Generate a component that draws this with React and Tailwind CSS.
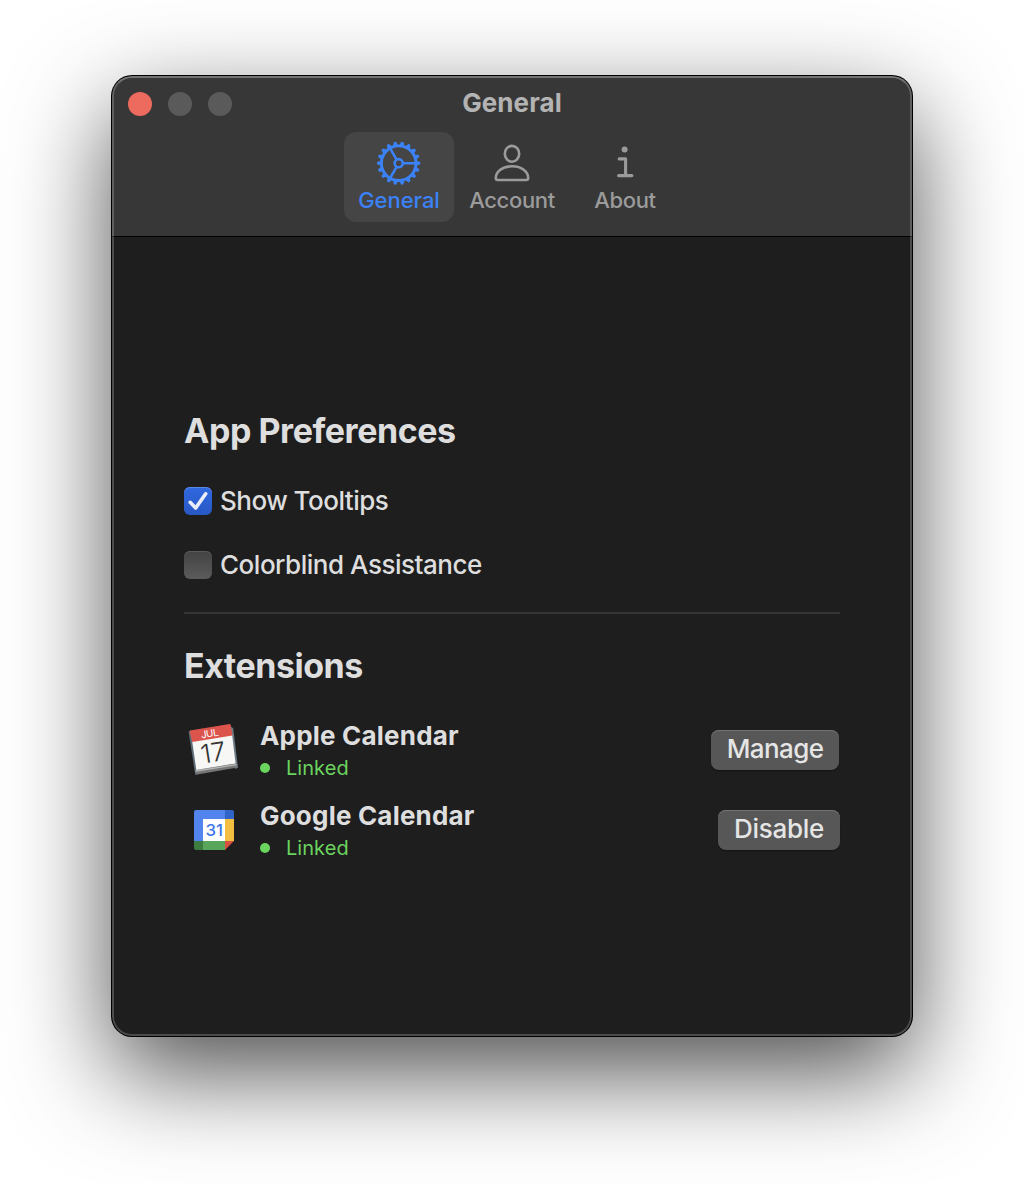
const TEETH = Array.from({ length: 18 }, (_, i) => i * 20);

function GearIcon() {
  return (
    <svg width="46" height="46" viewBox="-22.7 -23.2 46 46" fill="none" stroke="currentColor" strokeWidth="2.6">
      <circle r="17.3" strokeWidth="2.9" />
      <circle r="4.1" />
      {[0, 120, 240].map((a) => (
        <path key={a} d="M4.5 0H17.5" transform={`rotate(${a})`} />
      ))}
      {TEETH.map((a) => (
        <path key={a} d="M18 -2.4L21.4 -1.3Q22.1 0 21.4 1.3L18 2.4Z" transform={`rotate(${a})`} fill="currentColor" stroke="none" />
      ))}
    </svg>
  );
}

function PersonIcon() {
  return (
    <svg width="46" height="46" viewBox="0 0 46 46" fill="none" stroke="currentColor" strokeWidth="2.6" strokeLinejoin="round">
      <ellipse cx="23" cy="13.8" rx="7.2" ry="7.9" />
      <path d="M8.8 40H37.2Q39.2 40 39.2 38C39.2 32.5 33.5 26.3 23 26.3S6.8 32.5 6.8 38Q6.8 40 8.8 40Z" />
    </svg>
  );
}

function InfoIcon() {
  return (
    <svg width="46" height="46" viewBox="0 0 46 46" fill="none" stroke="currentColor" strokeWidth="3" strokeLinecap="round" strokeLinejoin="round">
      <circle cx="22.6" cy="9.6" r="3" fill="currentColor" stroke="none" />
      <path d="M17.2 18.9H23.6V35.4M16.6 35.6H29.9" strokeWidth="3.1" />
    </svg>
  );
}

function AppleCalendarIcon() {
  return (
    <svg width="56" height="56" viewBox="0 0 56 56">
      <path d="M4.6 11.8L7 10L14 51L11.3 55.3Z" fill="#5c6b75" />
      <path d="M46 6L49.2 8.2L54 47.8L51 49Z" fill="#6b7a82" />
      <path d="M11.3 50L51.8 43.5L53.6 47.6L11.8 54.8Z" fill="#77777a" />
      <path d="M11.6 51.2L52.6 44.6" stroke="#b9b9b6" strokeWidth="1.2" />
      <path d="M8 20L48 14L51.6 43.4L12.3 50.1Z" fill="#f7f7f6" />
      <path d="M6 10.6L45.6 4Q46.4 4 46.6 4.8L48.4 15.6L8.3 22L5.7 11.6Z" fill="#dc554d" />
      <g transform="rotate(-9 27 28)" fontFamily="Inter, sans-serif" textAnchor="middle">
        <text x="28" y="17" fontSize="10" fill="#fff" textLength="18">JUL</text>
        <text x="28.5" y="42.2" fontSize="26" fontWeight="300" fill="#333" textLength="25" lengthAdjust="spacingAndGlyphs">17</text>
      </g>
    </svg>
  );
}

function GoogleCalendarIcon() {
  return (
    <svg width="40" height="40" viewBox="0 0 40 40">
      <path d="M2 0H31V9H9V31H0V2Q0 0 2 0Z" fill="#5383ec" />
      <path d="M31 0H38Q40 0 40 2V9H31Z" fill="#3064c8" />
      <path d="M31 9H40V31H31Z" fill="#f2bf42" />
      <path d="M0 31H9V40H2Q0 40 0 38Z" fill="#3c7d3f" />
      <path d="M9 31H31V40H9Z" fill="#58a55c" />
      <path d="M31 31H40L31 40Z" fill="#d85140" />
      <path d="M9 9H31V31H9Z" fill="#fff" />
      <text x="20.2" y="26" fontSize="16.5" fontFamily="Inter, sans-serif" fontWeight="500" fill="#3d76e8" textAnchor="middle" textLength="17.5" lengthAdjust="spacingAndGlyphs">31</text>
    </svg>
  );
}

function Tab({ icon, label, active }) {
  return (
    <div className={`flex h-[90px] w-[110px] flex-col items-center rounded-xl pt-2 text-[22px] leading-[26px] font-medium ${active ? "bg-[#454545] text-[#3b82f7] tracking-[-0.05px]" : "text-[#9b9b9b] tracking-[-0.35px]"}`}>
      {icon}
      <span className="mt-px">{label}</span>
    </div>
  );
}

function Extension({ icon, name, button }) {
  return (
    <div className="flex h-20 items-start">
      <div className="flex h-14 w-[76px] items-start">{icon}</div>
      <div className="grow">
        <h3 className="text-[26px] leading-8 font-bold tracking-[0.2px]">{name}</h3>
        <div className="flex items-center text-[20px] leading-6 tracking-[0.05px] text-[#6bd45f]">
          <span className="mt-1 mr-4 size-2.5 rounded-full bg-[#6bd45f]" />
          <span className="mt-1">Linked</span>
        </div>
      </div>
      {button}
    </div>
  );
}

const buttonClass = "mt-2.5 h-10 rounded-lg bg-[#575757] pb-0.5 text-[26px] leading-[36px] font-medium text-[#e5e5e5] shadow-[inset_0_1px_0_#737373,0_1px_1px_rgba(0,0,0,0.4)]";

export default function App() {
  return (
    <main className="h-[1184px] w-[1024px] overflow-hidden bg-white px-28 pt-[76px] font-['Inter',sans-serif] text-[#dedede]">
      <section className="relative flex h-[960px] w-[800px] flex-col overflow-hidden rounded-[20px] bg-[#1e1e1e] shadow-[0_0_0_1px_#000,0_36px_100px_rgba(0,0,0,0.7)]">
        <header className="h-[161px] shrink-0 border-b border-black bg-[#373737]">
          <div className="grid h-14 grid-cols-[1fr_auto_1fr] items-start px-4">
            <div className="flex gap-4 pt-4">
              <span className="size-6 rounded-full bg-[#ed6a5e]" />
              <span className="size-6 rounded-full bg-[#5a5a5a]" />
              <span className="size-6 rounded-full bg-[#5a5a5a]" />
            </div>
            <h1 className="pt-[11px] text-[26px] leading-8 font-bold tracking-[0.1px] text-[#b3b3b3]">General</h1>
          </div>
          <nav className="flex gap-[3px] pl-[232px]">
            <Tab icon={<GearIcon />} label="General" active />
            <Tab icon={<PersonIcon />} label="Account" />
            <Tab icon={<InfoIcon />} label="About" />
          </nav>
        </header>

        <div className="px-[72px] pt-[174px]">
          <h2 className="text-[34px] leading-10 font-bold tracking-[-0.45px]">App Preferences</h2>
          <div className="mt-[34px] flex h-8 items-center gap-2">
            <span className="flex size-7 items-center justify-center rounded-md bg-linear-to-b from-[#3068e0] to-[#2958c4] shadow-[inset_0_1px_0_#5c88e6]">
              <svg width="28" height="28" viewBox="0 0 28 28" fill="none" stroke="#e9edf9" strokeWidth="3.6" strokeLinecap="round" strokeLinejoin="round">
                <path d="M6.2 15.3L11.7 21L21.7 6.8" />
              </svg>
            </span>
            <span className="text-[26px] leading-8 font-medium tracking-[-0.52px]">Show Tooltips</span>
          </div>
          <div className="mt-8 flex h-8 items-center gap-2">
            <span className="size-7 rounded-md bg-linear-to-b from-[#434343] to-[#5b5b5b] shadow-[inset_0_1px_0_#5a5a5a]" />
            <span className="text-[26px] leading-8 font-medium tracking-[-0.48px]">Colorblind Assistance</span>
          </div>
          <hr className="mt-[31px] border-0 border-t-2 border-[#353535]" />
          <h2 className="mt-8 mb-[34px] text-[34px] leading-10 font-bold tracking-[-0.5px]">Extensions</h2>
          <Extension
            icon={<AppleCalendarIcon />}
            name="Apple Calendar"
            button={<button className={`${buttonClass} mr-px w-32 tracking-[-0.6px]`}>Manage</button>}
          />
          <Extension
            icon={<div className="pt-2.5 pl-2.5"><GoogleCalendarIcon /></div>}
            name="Google Calendar"
            button={<button className={`${buttonClass} w-[122px] tracking-[-0.3px]`}>Disable</button>}
          />
        </div>
        <div className="pointer-events-none absolute inset-0 rounded-[20px] border-2 border-white/20 border-t-white/30" />
      </section>
    </main>
  );
}
